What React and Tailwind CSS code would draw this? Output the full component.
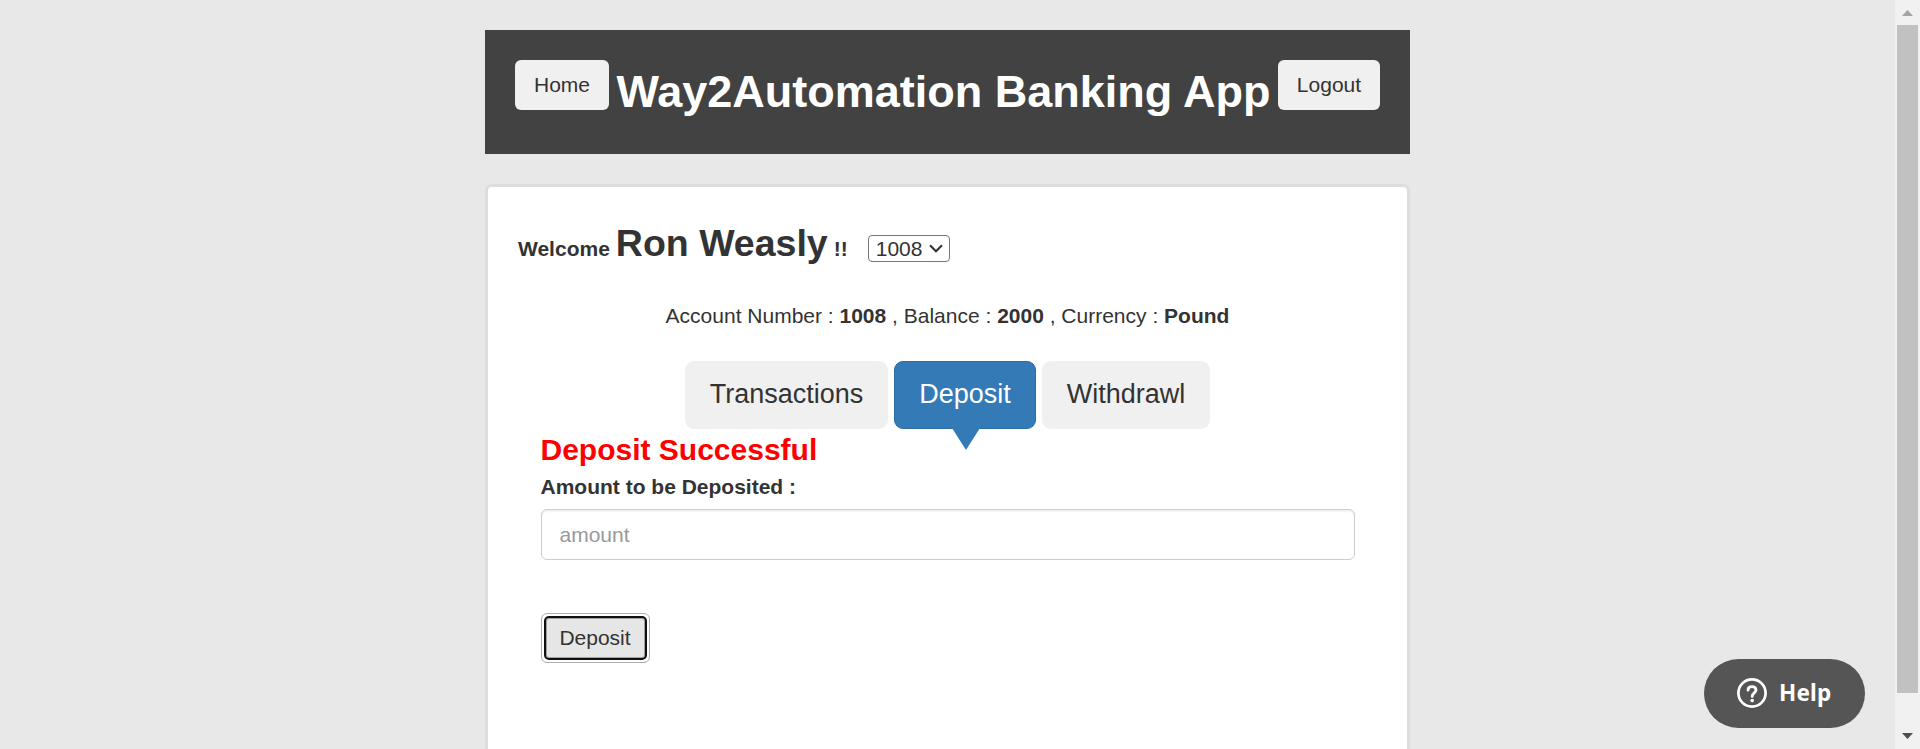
import React from "react";

function Header() {
  return (
    <header className="flex h-[124px] w-[925px] shrink-0 items-start justify-between bg-[#424242] p-[30px]">
      <button className="h-[50px] w-[94px] rounded-[6px] bg-[#f0f0f0] text-[21px] leading-[50px]">Home</button>
      <h1 className="mt-1 whitespace-nowrap text-[45px] leading-[56px] font-bold text-white">Way2Automation Banking App</h1>
      <button className="h-[50px] w-[102px] rounded-[6px] bg-[#f0f0f0] text-[21px] leading-[50px]">Logout</button>
    </header>
  );
}

function AccountPicker() {
  return (
    <button className="ml-[20px] flex h-[27px] w-[82px] items-center justify-between rounded-[4px] border border-[#767676] bg-white pr-[6px] pl-[7px] text-[21px] leading-[25px]">
      <span>1008</span>
      <svg className="h-[9px] w-[14px]" viewBox="0 0 14 9" fill="none" stroke="#333" strokeWidth="2.1">
        <path d="M1 1.2 L7 7.2 L13 1.2" />
      </svg>
    </button>
  );
}

function Tabs() {
  return (
    <nav className="mt-[30px] flex h-[68px] justify-center gap-[6px] text-[27px] leading-[64px]">
      <button className="w-[203px] rounded-[9px] bg-[#f0f0f0] pb-[2px]">Transactions</button>
      <button className="relative w-[142px] rounded-[9px] border border-[#2e6da4] bg-[#337ab7] pb-[2px] text-white">
        Deposit
        <svg className="absolute top-[66px] left-[57px] h-[22px] w-[28px]" viewBox="0 0 28 22">
          <path d="M0 0 H28 L14 22 Z" fill="#337ab7" />
        </svg>
      </button>
      <button className="w-[168px] rounded-[9px] bg-[#f0f0f0] pb-[2px]">Withdrawl</button>
    </nav>
  );
}

function DepositForm() {
  return (
    <form className="flex flex-col items-start px-[52.5px]">
      <p className="h-[42px] text-[30px] leading-[42px] font-bold text-[#ff0000]">Deposit Successful</p>
      <label className="h-[30px] text-[21px] leading-[32px] font-bold">Amount to be Deposited :</label>
      <input
        placeholder="amount"
        className="mt-[8px] h-[51px] w-full rounded-[6px] border border-[#ccc] bg-white px-[18px] text-[21px] shadow-[inset_0_1.5px_1.5px_rgba(0,0,0,0.075)] placeholder:text-[#999]"
      />
      <button
        type="button"
        className="mt-[53px] flex h-[50px] w-[109px] rounded-[6px] border border-[#adadad] bg-white p-[2px]"
      >
        <span className="flex h-full w-full items-center justify-center rounded-[5px] border-[2px] border-[#101010] bg-[#e6e6e6] text-[21px] leading-[30px] shadow-[inset_0_0_0_1px_#a0a0a0]">
          Deposit
        </span>
      </button>
    </form>
  );
}

function Scrollbar() {
  return (
    <div className="flex w-[25px] flex-col items-center bg-[#f1f1f1]">
      <div className="flex h-[25px] items-center justify-center pt-px">
        <svg className="h-[6px] w-[11px]" viewBox="0 0 11 6">
          <path d="M5.5 0 L11 6 H0 Z" fill="#a3a3a3" />
        </svg>
      </div>
      <div className="h-[668px] w-[21px] bg-[#c1c1c1]" />
      <div className="mt-auto flex h-[25px] items-center justify-center pb-px">
        <svg className="h-[6px] w-[11px]" viewBox="0 0 11 6">
          <path d="M0 0 H11 L5.5 6 Z" fill="#505050" />
        </svg>
      </div>
    </div>
  );
}

function HelpButton() {
  return (
    <button className="fixed right-[55px] bottom-[21px] flex h-[69px] w-[161px] items-center rounded-full bg-[#555] pl-[33px] text-white">
      <svg className="mb-[2px] h-[30px] w-[30px]" viewBox="0 0 30 30" fill="none" stroke="#fff">
        <circle cx="15" cy="15" r="13.6" strokeWidth="2.7" />
        <path d="M11 12.2 C11 9.8 12.7 8.6 15 8.6 C17.4 8.6 19 10 19 12 C19 15 15.2 14.8 15.2 18.4" strokeWidth="2.8" strokeLinecap="round" />
        <circle cx="15.2" cy="22.6" r="1.8" fill="#fff" stroke="none" />
      </svg>
      <span className="mb-[2px] ml-[12px] font-['Noto_Sans','Open_Sans',sans-serif] text-[22.5px] leading-[30px] font-bold tracking-[0.2px]">Help</span>
    </button>
  );
}

export default function App() {
  return (
    <div className="flex h-[749px] w-full overflow-hidden bg-[#e8e8e8] font-['Liberation_Sans',Arial,sans-serif] text-[#333]">
      <main className="flex flex-1 flex-col items-center pt-[30px]">
        <Header />
        <section className="mt-[30px] h-[600px] w-[925px] shrink-0 rounded-t-[7px] border-[3px] border-b-0 border-[#ddd] bg-white">
          <div className="mt-[30px] flex h-[53px] items-baseline pl-[30px] font-bold">
            <span className="text-[21px]">Welcome</span>
            <span className="ml-[6px] text-[37.5px] leading-[53px]">Ron Weasly</span>
            <span className="ml-[6px] text-[21px]">!!</span>
            <div className="font-normal"><AccountPicker /></div>
          </div>
          <p className="mt-[31px] text-center text-[21px] leading-[30px] whitespace-pre">
            Account Number : <b>1008</b> , Balance : <b>2000</b> , Currency : <b>Pound</b>
          </p>
          <Tabs />
          <DepositForm />
        </section>
      </main>
      <Scrollbar />
      <HelpButton />
    </div>
  );
}
